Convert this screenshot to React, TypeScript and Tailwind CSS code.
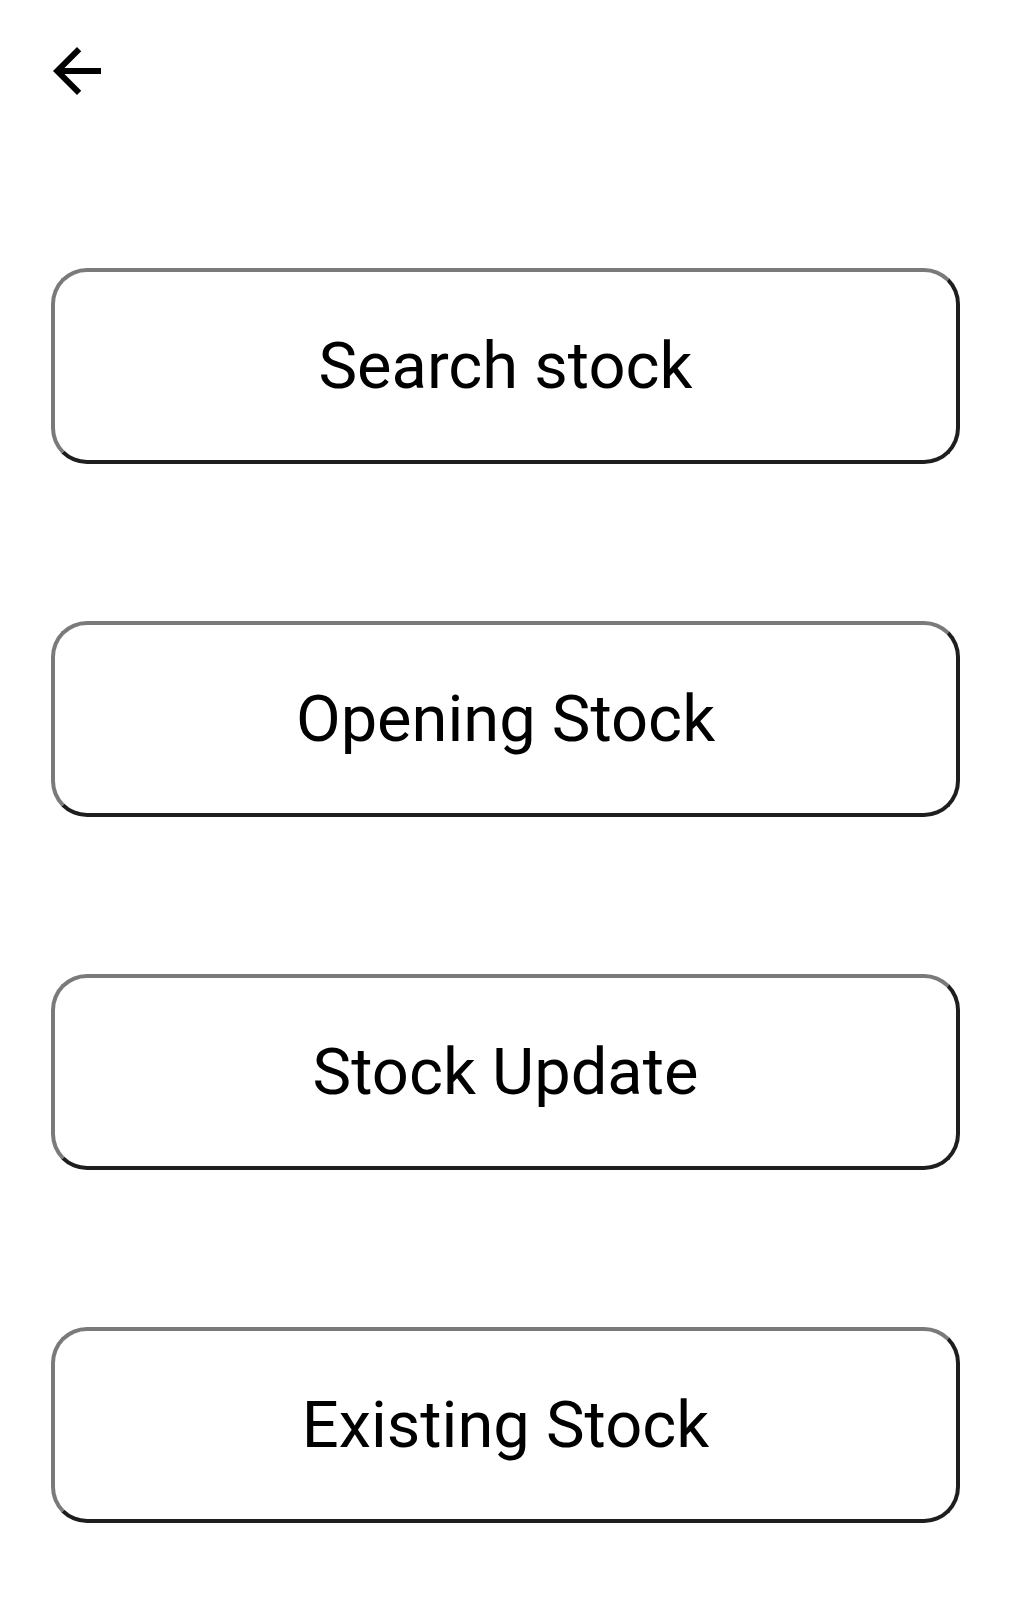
const items = ["Search stock", "Opening Stock", "Stock Update", "Existing Stock"];

function BackArrow() {
  return (
    <svg width="72" height="72" viewBox="0 0 24 24" fill="#000">
      <path d="M20 11H7.83l5.59-5.59L12 4l-8 8 8 8 1.41-1.41L7.83 13H20v-2z" />
    </svg>
  );
}

export default function App() {
  return (
    <div className="min-h-screen bg-white font-['Roboto',sans-serif]">
      <div className="pt-[35px] pl-[41px]">
        <button className="block">
          <BackArrow />
        </button>
      </div>

      <div className="mt-[161px] pr-[50px] pl-[51px] flex flex-col gap-[157px]">
        {items.map((label) => (
          <button
            key={label}
            className="h-[196px] w-full rounded-[36px] border-4 border-t-[#7a7a7a] border-l-[#7a7a7a] border-r-[#1e1e1e] border-b-[#1e1e1e] bg-white flex items-center justify-center text-[65px] leading-none text-black"
          >
            {label}
          </button>
        ))}
      </div>
    </div>
  );
}
